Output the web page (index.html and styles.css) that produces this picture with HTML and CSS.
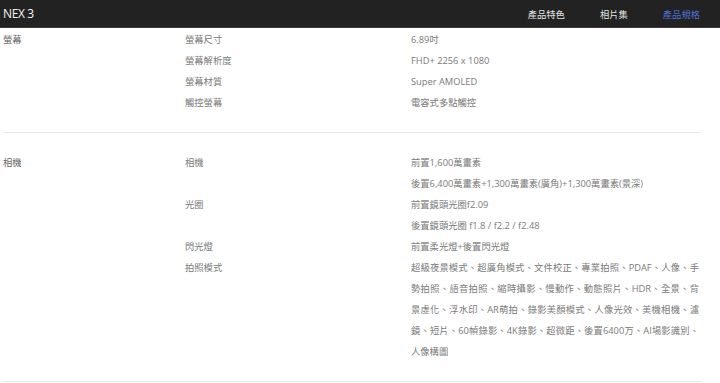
FILE: index.html
```html
<!DOCTYPE html>
<html lang="zh-Hant">
<head>
<meta charset="utf-8">
<title>NEX 3 產品規格</title>
<link rel="stylesheet" href="styles.css">
</head>
<body>
<header class="topbar">
  <div class="brand">NEX 3</div>
  <nav class="nav">
    <a class="nav-item">產品特色</a>
    <a class="nav-item">相片集</a>
    <a class="nav-item active">產品規格</a>
  </nav>
</header>
<main class="specs">
  <section class="group first">
    <div class="group-title">螢幕</div>
    <div class="rows">
      <div class="row"><div class="key">螢幕尺寸</div><div class="vals"><p>6.89吋</p></div></div>
      <div class="row"><div class="key">螢幕解析度</div><div class="vals"><p>FHD+ 2256 x 1080</p></div></div>
      <div class="row"><div class="key">螢幕材質</div><div class="vals"><p>Super AMOLED</p></div></div>
      <div class="row"><div class="key">觸控螢幕</div><div class="vals"><p>電容式多點觸控</p></div></div>
    </div>
  </section>
  <section class="group">
    <div class="group-title">相機</div>
    <div class="rows">
      <div class="row"><div class="key">相機</div><div class="vals"><p>前置1,600萬畫素</p><p>後置6,400萬畫素+1,300萬畫素(廣角)+1,300萬畫素(景深)</p></div></div>
      <div class="row"><div class="key">光圈</div><div class="vals"><p>前置鏡頭光圈f2.09</p><p>後置鏡頭光圈 f1.8 / f2.2 / f2.48</p></div></div>
      <div class="row"><div class="key">閃光燈</div><div class="vals"><p>前置柔光燈+後置閃光燈</p></div></div>
      <div class="row"><div class="key">拍照模式</div><div class="vals"><p class="justify">超級夜景模式、超廣角模式、文件校正、專業拍照、PDAF、人像、手勢拍照、語音拍照、縮時攝影、慢動作、動態照片、HDR、全景、背景虛化、浮水印、AR萌拍、錄影美顏模式、人像光效、美機相機、濾鏡、短片、60幀錄影、4K錄影、超微距、後置6400万、AI場影識別、人像構圖</p></div></div>
    </div>
  </section>
</main>
</body>
</html>
```
FILE: styles.css
```css
html, body {
  margin: 0;
  padding: 0;
  background: #ffffff;
  font-family: "Open Sans", "Noto Sans CJK TC", sans-serif;
}

.topbar {
  display: flex;
  align-items: center;
  justify-content: space-between;
  height: 27px;
  background: #222222;
  border-bottom: 1px solid #3a3a3a;
  padding: 0 20px 0 3px;
}

.brand {
  color: #f2f2f2;
  font-size: 12px;
  letter-spacing: -0.4px;
}

.nav {
  display: flex;
  gap: 35px;
}

.nav-item {
  color: #e6e6e6;
  font-size: 9.3px;
  font-family: "Noto Sans CJK TC", sans-serif;
}

.nav-item.active {
  color: #4f70d9;
}

.specs {
  width: 699px;
  padding-left: 3px;
}

.group {
  display: flex;
  padding: 19px 0 19px 0;
  border-bottom: 1px solid #e8e8e8;
  color: #7a7a7a;
  font-size: 9.3px;
  line-height: 21px;
}

.group.first {
  padding-top: 1px;
}

.group-title {
  width: 182px;
  flex: none;
  color: #666666;
}

.rows {
  flex: 1;
  display: flex;
  flex-direction: column;
}

.row {
  display: flex;
}

.key {
  width: 226px;
  flex: none;
}

.vals {
  flex: 1;
  padding-right: 3px;
}

.vals p {
  margin: 0;
}

.vals .justify {
  text-align: justify;
}
```
